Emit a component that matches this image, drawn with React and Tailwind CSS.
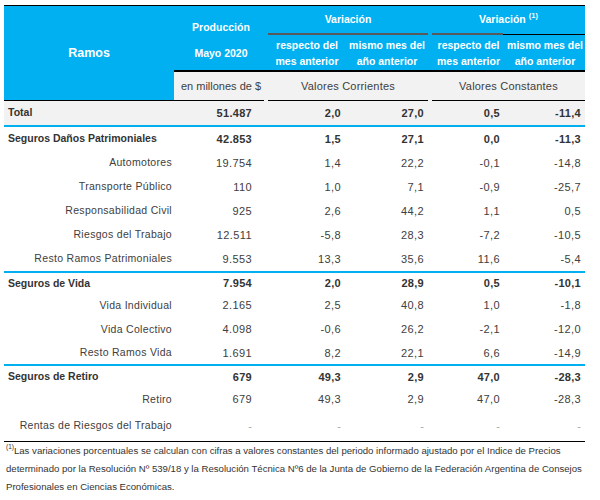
const BLUE = "bg-[#00b0f0]";

const rows = [
  { label: "Seguros Daños Patrimoniales", bold: true, h: "h-[24px]", v: ["42.853", "1,5", "27,1", "0,0", "-11,3"] },
  { label: "Automotores", h: "h-[24px]", v: ["19.754", "1,4", "22,2", "-0,1", "-14,8"] },
  { label: "Transporte Público", h: "h-[24px]", v: ["110", "1,0", "7,1", "-0,9", "-25,7"] },
  { label: "Responsabilidad Civil", h: "h-[24px]", v: ["925", "2,6", "44,2", "1,1", "0,5"] },
  { label: "Riesgos del Trabajo", h: "h-[24px]", v: ["12.511", "-5,8", "28,3", "-7,2", "-10,5"] },
  { label: "Resto Ramos Patrimoniales", h: "h-[24px]", v: ["9.553", "13,3", "35,6", "11,6", "-5,4"], line: true },
  { label: "Seguros de Vida", bold: true, h: "h-[21px]", v: ["7.954", "2,0", "28,9", "0,5", "-10,1"] },
  { label: "Vida Individual", h: "h-[23px]", v: ["2.165", "2,5", "40,8", "1,0", "-1,8"] },
  { label: "Vida Colectivo", h: "h-[25px]", v: ["4.098", "-0,6", "26,2", "-2,1", "-12,0"] },
  { label: "Resto Ramos Vida", h: "h-[22px]", v: ["1.691", "8,2", "22,1", "6,6", "-14,9"], line: true },
  { label: "Seguros de Retiro", bold: true, h: "h-[22px]", v: ["679", "49,3", "2,9", "47,0", "-28,3"] },
  { label: "Retiro", h: "h-[23px]", v: ["679", "49,3", "2,9", "47,0", "-28,3"] },
  { label: "Rentas de Riesgos del Trabajo", h: "h-[30px]", v: ["-", "-", "-", "-", "-"], dash: true },
];

const colCls = [
  "w-[94px] pr-[16px]",
  "w-[78px] pr-[5px]",
  "w-[82px] pr-[4px]",
  "w-[77px] pr-[5px]",
  "w-[80px] pr-[4px]",
];

const Row = ({ r }) => {
  const numCls = r.bold
    ? "font-bold text-[11px] tracking-[0.3px] text-[#333]"
    : r.dash
    ? "text-[11px] text-[#a6a6a6]"
    : "text-[11px] tracking-[0.4px] text-[#404040]";
  return (
    <>
      <div className={`flex items-center ${r.h} ${r.gray ? "bg-[#f2f2f2]" : ""}`}>
        {r.bold ? (
          <div className="w-[170px] pl-[4px] text-[10.5px] font-bold text-[#333]">{r.label}</div>
        ) : (
          <div className="w-[170px] pr-[2px] text-right text-[10.5px] tracking-[0.3px] text-[#404040]">{r.label}</div>
        )}
        {r.v.map((v, i) => (
          <div key={i} className={`${colCls[i]} text-right ${numCls}`}>{v}</div>
        ))}
      </div>
      {r.line && <div className={`h-[2px] ${BLUE}`} />}
    </>
  );
};

const SubHead = ({ a, b, w }) => (
  <div className={`${w} flex flex-col items-center justify-center leading-[16px]`}>
    <span>{a}</span>
    <span>{b}</span>
  </div>
);

export default function App() {
  return (
    <div className="h-[500px] w-[600px] bg-white pt-[5px] font-['Liberation_Sans',Arial,sans-serif]">
      <div className="ml-[4px] w-[581px]">
        <div className="h-px bg-black" />
        {/* header */}
        <div className="flex">
          <div className={`flex h-[94px] w-[170px] items-center justify-center ${BLUE} text-[12.5px] font-bold text-white`}>
            Ramos
          </div>
          <div className="w-[411px]">
            <div className={`flex h-[64px] ${BLUE} text-[10.5px] font-bold text-white`}>
              <div className="flex w-[94px] flex-col items-center gap-[10px] pt-[13px] leading-[16px]">
                <span>Producción</span>
                <span>Mayo 2020</span>
              </div>
              <div className="flex w-[160px] flex-col">
                <div className="flex h-[27px] items-center justify-center">Variación</div>
                <div className="h-[2px] bg-[#595959]" />
                <div className="flex flex-1">
                  <SubHead w="w-[78px]" a="respecto del" b="mes anterior" />
                  <SubHead w="w-[82px]" a="mismo mes del" b="año anterior" />
                </div>
              </div>
              <div className="w-[4px]" />
              <div className="flex w-[153px] flex-col">
                <div className="flex h-[27px] items-center justify-center">
                  Variación<sup className="ml-[3px] text-[7.5px]">(1)</sup>
                </div>
                <div className="flex h-[2px]">
                  <div className="h-[2px] w-[71px] bg-[#595959]" />
                  <div className="mt-[1px] h-px flex-1 bg-black" />
                </div>
                <div className="flex flex-1">
                  <SubHead w="w-[73px]" a="respecto del" b="mes anterior" />
                  <SubHead w="w-[80px]" a="mismo mes del" b="año anterior" />
                </div>
              </div>
            </div>
            <div className="h-[2px] bg-black" />
            <div className="flex h-[28px] items-center bg-[#f2f2f2] text-[11px] text-[#404040]">
              <div className="w-[94px] text-center">en millones de $</div>
              <div className="w-[160px] text-center tracking-[0.2px]">Valores Corrientes</div>
              <div className="w-[4px]" />
              <div className="w-[153px] text-center tracking-[0.2px]">Valores Constantes</div>
            </div>
          </div>
        </div>
        <div className="flex h-px">
          <div className="w-[260px] bg-black" />
          <div className="w-[4px] bg-[#f2f2f2]" />
          <div className="w-[160px] bg-black" />
          <div className="w-[4px] bg-[#f2f2f2]" />
          <div className="w-[153px] bg-black" />
        </div>
        {/* body */}
        <Row r={{ label: "Total", bold: true, gray: true, h: "h-[24px]", v: ["51.487", "2,0", "27,0", "0,5", "-11,4"] }} />
        <div className={`h-[2px] ${BLUE}`} />
        {rows.map((r) => (
          <Row key={r.label} r={r} />
        ))}
        <div className="h-px bg-black" />
        <div className="pl-[2px] text-[9.6px] leading-[18px] whitespace-nowrap text-[#333]">
          <div className="flex items-start">
            <span className="mt-[1px] text-[6.5px] leading-[8px]">(1)</span>
            <span>Las variaciones porcentuales se calculan con cifras a valores constantes del periodo informado ajustado por el Indice de Precios</span>
          </div>
          <div>determinado por la Resolución Nº 539/18 y la Resolución Técnica Nº6 de la Junta de Gobierno de la Federación Argentina de Consejos</div>
          <div>Profesionales en Ciencias Económicas.</div>
        </div>
      </div>
    </div>
  );
}
